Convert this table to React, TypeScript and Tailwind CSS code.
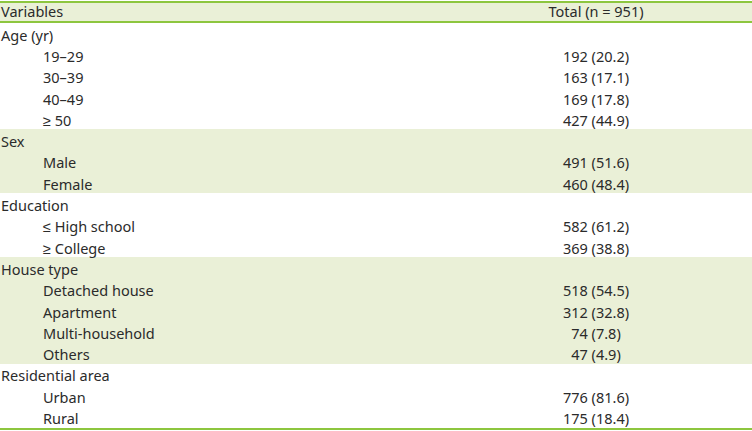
const GROUPS = [
  { label: "Age (yr)", rows: [["19–29", "192 (20.2)"], ["30–39", "163 (17.1)"], ["40–49", "169 (17.8)"], ["≥ 50", "427 (44.9)"]] },
  { label: "Sex", rows: [["Male", "491 (51.6)"], ["Female", "460 (48.4)"]] },
  { label: "Education", rows: [["≤ High school", "582 (61.2)"], ["≥ College", "369 (38.8)"]] },
  { label: "House type", rows: [["Detached house", "518 (54.5)"], ["Apartment", "312 (32.8)"], ["Multi-household", "74 (7.8)"], ["Others", "47 (4.9)"]] },
  { label: "Residential area", rows: [["Urban", "776 (81.6)"], ["Rural", "175 (18.4)"]] },
];

const Row = ({ label, value, indent }: { label: string; value?: string; indent?: boolean }) => (
  <div className="flex h-[21.3px] items-center pt-[2px]">
    <div className={`w-[440px] ${indent ? "pl-[43px]" : "pl-px"}`}>{label}</div>
    <div className="flex-1 text-center">{value}</div>
  </div>
);

const App = () => {
  return (
    <div className="w-[752px] h-[431px] bg-white pt-px text-[14.5px] leading-[20px] text-[#2b2b2b] font-['Noto_Sans',sans-serif]">
      <div className="flex h-[22px] items-center border-t-2 border-b-2 border-[#8dc63f] bg-[#eaf0d7] pb-[2px]">
        <div className="w-[440px] pl-px">Variables</div>
        <div className="flex-1 text-center">Total (n = 951)</div>
      </div>
      <div className="border-b-2 border-[#8dc63f]">
        {GROUPS.map((g, i) => (
          <div key={g.label} className={i % 2 === 1 ? "bg-[#eaf0d7]" : ""}>
            <Row label={g.label} />
            {g.rows.map(([l, v]) => (
              <Row key={l} label={l} value={v} indent />
            ))}
          </div>
        ))}
      </div>
    </div>
  );
};

export default App;
